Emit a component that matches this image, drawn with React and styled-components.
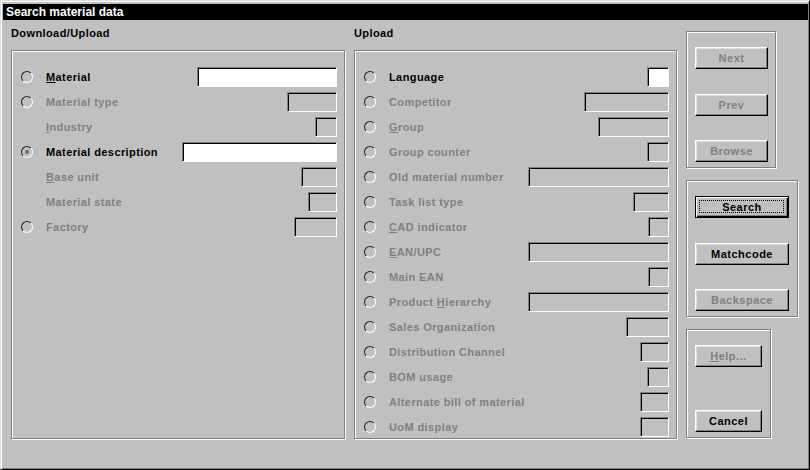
import styled, { createGlobalStyle, css } from 'styled-components';

const GlobalStyle = createGlobalStyle`
    html, body {
        margin: 0;
        padding: 0;
        background: #c0c0c0;
    }
    body {
        font-family: "Liberation Sans", Arial, sans-serif;
        font-size: 11px;
        font-weight: bold;
        letter-spacing: 0.4px;
    }
`;

const leftRows = [
    { label: 'Material', key: 'M', radio: true, input: 140, enabled: true, white: true },
    { label: 'Material type', radio: true, input: 50 },
    { label: 'Industry', key: 'I', input: 22 },
    { label: 'Material description', radio: true, checked: true, input: 155, enabled: true, white: true },
    { label: 'Base unit', key: 'B', input: 36 },
    { label: 'Material state', input: 29 },
    { label: 'Factory', radio: true, input: 43 },
];

const uploadRows = [
    { label: 'Language', input: 22, enabled: true, white: true },
    { label: 'Competitor', input: 85 },
    { label: 'Group', key: 'G', input: 71 },
    { label: 'Group counter', input: 22 },
    { label: 'Old material number', input: 141 },
    { label: 'Task list type', input: 36 },
    { label: 'CAD indicator', key: 'C', input: 21 },
    { label: 'EAN/UPC', key: 'E', input: 141 },
    { label: 'Main EAN', input: 21 },
    { label: 'Product Hierarchy', key: 'H', input: 141 },
    { label: 'Sales Organization', input: 43 },
    { label: 'Distribution Channel', input: 29 },
    { label: 'BOM usage', input: 22 },
    { label: 'Alternate bill of material', input: 29 },
    { label: 'UoM display', input: 29 },
].map((r) => ({ ...r, radio: true }));

// underline the access key letter (first match)
function Caption({ text, accel }) {
    if (!accel) return text;
    const i = text.indexOf(accel);
    return (
        <>
            {text.slice(0, i)}
            <u>{accel}</u>
            {text.slice(i + 1)}
        </>
    );
}

function FieldRow({ row }) {
    return (
        <Row>
            <RadioSlot>{row.radio && <Radio $checked={row.checked} />}</RadioSlot>
            <Label $enabled={row.enabled}>
                <Caption text={row.label} accel={row.key} />
            </Label>
            <Field style={{ width: row.input }} $white={row.white} />
        </Row>
    );
}

export default function App() {
    return (
        <>
            <GlobalStyle />
            <Window>
                <TitleBar>Search material data</TitleBar>
                <Content>
                    <Column>
                        <GroupTitle>Download/Upload</GroupTitle>
                        <GroupBox $width={334}>
                            {leftRows.map((r) => (
                                <FieldRow key={r.label} row={r} />
                            ))}
                        </GroupBox>
                    </Column>
                    <Column>
                        <GroupTitle>Upload</GroupTitle>
                        <GroupBox $width={323}>
                            {uploadRows.map((r) => (
                                <FieldRow key={r.label} row={r} />
                            ))}
                        </GroupBox>
                    </Column>
                    <ButtonColumn>
                        <ButtonBox $width={90} $height={137}>
                            <Button $w={73} disabled>Next</Button>
                            <Button $w={73} disabled>Prev</Button>
                            <Button $w={73} disabled>Browse</Button>
                        </ButtonBox>
                        <ButtonBox $width={112} $height={137}>
                            <Button $w={94} $default>
                                <span>Search</span>
                            </Button>
                            <Button $w={94}>Matchcode</Button>
                            <Button $w={94} disabled>Backspace</Button>
                        </ButtonBox>
                        <ButtonBox $width={85} $height={109}>
                            <Button $w={67} disabled>
                                <u>H</u>elp...
                            </Button>
                            <Button $w={67}>Cancel</Button>
                        </ButtonBox>
                    </ButtonColumn>
                </Content>
            </Window>
        </>
    );
}

const Window = styled.div`
    box-sizing: border-box;
    width: 810px;
    height: 470px;
    padding: 3px 1px 0 2px;
    border: 1px solid;
    border-color: #dfdfdf #000 #000 #dfdfdf;
    box-shadow: inset 1px 1px #fff, inset -1px -1px #808080;
    background: #c0c0c0;
    display: flex;
    flex-direction: column;
`;

const TitleBar = styled.div`
    height: 16px;
    line-height: 16px;
    background: #000;
    color: #fff;
    font-size: 12px;
    letter-spacing: 0;
    padding-left: 3px;
`;

const Content = styled.div`
    display: flex;
    gap: 9px;
    padding-left: 8px;
`;

const Column = styled.div`
    display: flex;
    flex-direction: column;
    padding-top: 7px;
`;

const GroupTitle = styled.div`
    height: 13px;
    line-height: 13px;
    margin-bottom: 10px;
    color: #000;
`;

const etched = css`
    box-sizing: border-box;
    border: 1px solid #808080;
    box-shadow: inset 1px 1px #fff, 1px 1px #fff;
`;

const GroupBox = styled.div`
    ${etched};
    width: ${(p) => p.$width}px;
    height: 389px;
    padding: 16px 7px 0 9px;
    display: flex;
    flex-direction: column;
    gap: 5px;
`;

const Row = styled.div`
    display: flex;
    align-items: center;
    height: 20px;
`;

const RadioSlot = styled.div`
    width: 12px;
    height: 12px;
    margin-right: 13px;
    flex: none;
`;

const Radio = styled.div`
    box-sizing: border-box;
    width: 12px;
    height: 12px;
    border-radius: 50%;
    border: 1px solid;
    border-color: #202020 #fff #fff #202020;
    background: #c0c0c0;
    display: flex;
    align-items: center;
    justify-content: center;

    ${(p) =>
        p.$checked &&
        css`
            &::after {
                content: '';
                width: 4px;
                height: 4px;
                border-radius: 50%;
                background: #707070;
            }
        `}
`;

const Label = styled.span`
    color: ${(p) => (p.$enabled ? '#000' : '#808080')};
    white-space: nowrap;
    line-height: 13px;
`;

const Field = styled.div`
    box-sizing: border-box;
    height: 20px;
    margin-left: auto;
    flex: none;
    border: 1px solid;
    border-color: #808080 #fff #fff #808080;
    box-shadow: inset 1px 1px #000;
    background: ${(p) => (p.$white ? '#fff' : '#c0c0c0')};
`;

const ButtonColumn = styled.div`
    display: flex;
    flex-direction: column;
    gap: 12px;
    padding-top: 11px;
`;

const ButtonBox = styled.div`
    ${etched};
    width: ${(p) => p.$width}px;
    height: ${(p) => p.$height}px;
    padding: 15px 0 5px 8px;
    display: flex;
    flex-direction: column;
    justify-content: space-between;
    align-items: flex-start;
`;

const Button = styled.button`
    position: relative;
    box-sizing: border-box;
    width: ${(p) => p.$w}px;
    height: 22px;
    padding: 0;
    font: inherit;
    letter-spacing: 0.5px;
    color: #000;
    background: #c0c0c0;
    border: 1px solid;
    border-color: #fff #000 #000 #fff;
    box-shadow: inset -1px -1px #808080, inset 1px 1px #dfdfdf;

    &:disabled {
        color: #808080;
    }

    ${(p) =>
        p.$default &&
        css`
            border-color: #000;
            box-shadow: inset 1px 1px #fff, inset -1px -1px #000, inset -2px -2px #808080;

            &::after {
                content: '';
                position: absolute;
                inset: 3px 4px 4px 3px;
                border: 1px dotted #000;
            }
        `}
`;
